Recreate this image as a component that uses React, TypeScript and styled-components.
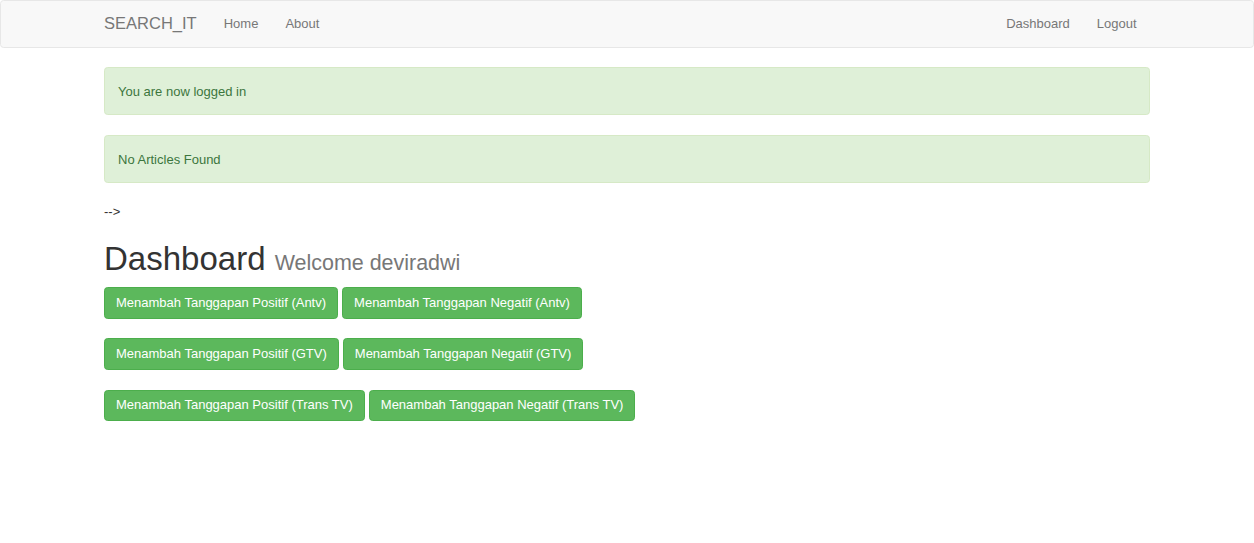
import React from "react";
import styled, { createGlobalStyle } from "styled-components";

const S = 0.9175;
const px = (n: number) => `${(n * S).toFixed(2)}px`;

const Global = createGlobalStyle`
  * { box-sizing: border-box; }
  html, body { margin: 0; padding: 0; background: #fff; }
  body {
    font-family: "Liberation Sans", Arial, Helvetica, sans-serif;
    font-size: 13px;
    line-height: ${px(20)};
    color: #333;
  }
`;

const Navbar = styled.nav`
  height: 48px;
  background: #f8f8f8;
  border: 1px solid #e7e7e7;
  border-radius: ${px(4)};
  margin-bottom: 19px;
`;

const Container = styled.div`
  width: 1046px;
  margin: 0 auto;
`;

const NavInner = styled(Container)`
  height: 100%;
  display: flex;
  align-items: center;
  justify-content: space-between;
`;

const NavGroup = styled.div`
  display: flex;
  align-items: center;
`;

const Brand = styled.a`
  font-size: ${px(18)};
  color: #777;
  text-decoration: none;
  padding-right: 13.5px;
  line-height: 46px;
`;

const NavLink = styled.a`
  color: #777;
  text-decoration: none;
  padding: 0 13.5px;
  line-height: 46px;
`;

const Alert = styled.div`
  height: 48px;
  padding: 3px 13px 0;
  display: flex;
  align-items: center;
  background: #dff0d8;
  border: 1px solid #d6e9c6;
  color: #3c763d;
  border-radius: ${px(4)};
  margin-bottom: 20px;
`;

const Arrow = styled.div`
  margin-top: 19px;
  height: 18px;
  line-height: 18px;
`;

const Heading = styled.h1`
  margin: 20px 0 0;
  font-size: ${px(36)};
  font-weight: 500;
  line-height: 1.1;
  color: #333;
  font-family: "Liberation Sans", Arial, sans-serif;
`;

const Small = styled.small`
  font-size: 65%;
  color: #777;
  font-weight: 400;
`;

const Rows = styled.div`
  margin-top: 10px;
  display: flex;
  flex-direction: column;
  gap: 19.6px;
`;

const Row = styled.div`
  display: flex;
  gap: 4px;
`;

const Button = styled.a`
  display: inline-flex;
  align-items: center;
  height: 31.5px;
  padding: 0 ${px(12)};
  background: #5cb85c;
  border: 1px solid #4cae4c;
  border-radius: ${px(4)};
  color: #fff;
  text-decoration: none;
  white-space: nowrap;
`;

const channels = ["Antv", "GTV", "Trans TV"];

export default function App() {
  return (
    <>
      <Global />
      <Navbar>
        <NavInner>
          <NavGroup>
            <Brand href="#">SEARCH_IT</Brand>
            <NavLink href="#">Home</NavLink>
            <NavLink href="#">About</NavLink>
          </NavGroup>
          <NavGroup>
            <NavLink href="#">Dashboard</NavLink>
            <NavLink href="#">Logout</NavLink>
          </NavGroup>
        </NavInner>
      </Navbar>
      <Container>
        <Alert>You are now logged in</Alert>
        <Alert>No Articles Found</Alert>
        <Arrow>--&gt;</Arrow>
        <Heading>
          Dashboard <Small>Welcome deviradwi</Small>
        </Heading>
        <Rows>
          {channels.map((c) => (
            <Row key={c}>
              <Button href="#">Menambah Tanggapan Positif ({c})</Button>
              <Button href="#">Menambah Tanggapan Negatif ({c})</Button>
            </Row>
          ))}
        </Rows>
      </Container>
    </>
  );
}
